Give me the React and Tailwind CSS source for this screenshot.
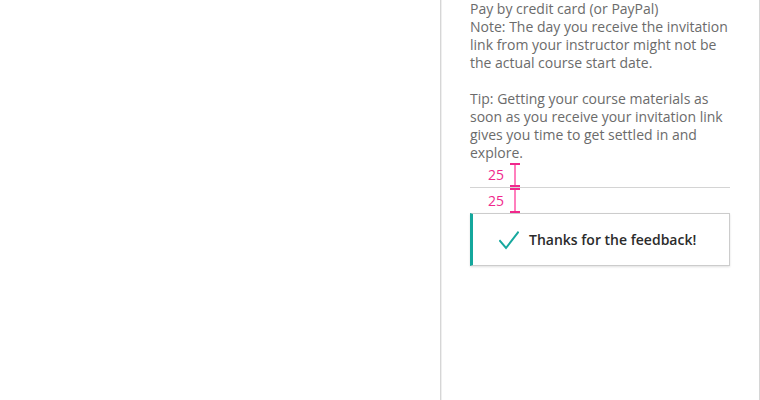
import React from "react";

function Check() {
  return (
    <svg width="20" height="20" viewBox="0 0 20 20" className="shrink-0 mt-[3px]">
      <path d="M1 10 L7 17 L19 1.5" fill="none" stroke="#17a89e" strokeWidth="2" strokeLinecap="square" strokeLinejoin="miter" />
    </svg>
  );
}

function Marker({ top, height }) {
  return (
    <div className="absolute left-[40px] w-[10px] flex flex-col items-center" style={{ top, height }}>
      <div className="w-[10px] h-[2px] bg-[#f0288c]" />
      <div className="flex-1 w-[2px] bg-[#ff7fbd]" />
      <div className="w-[10px] h-[2px] bg-[#f0288c]" />
    </div>
  );
}

export default function App() {
  const lines1 = [
    "Pay by credit card (or PayPal)",
    "Note: The day you receive the invitation",
    "link from your instructor might not be",
    "the actual course start date.",
  ];
  const lines2 = [
    "Tip: Getting your course materials as",
    "soon as you receive your invitation link",
    "gives you time to get settled in and",
    "explore.",
  ];
  return (
    <div className="w-[760px] h-[400px] bg-white flex overflow-hidden" style={{ fontFamily: '"Open Sans", sans-serif' }}>
      <div className="w-[440px] shrink-0" />
      <div className="w-[320px] h-[400px] border-l border-r border-[#d6d6d6] shadow-[inset_1px_0_0_#efefef] px-[29px]">
        <div className="relative">
          <div className="text-[14px] leading-[18px] text-[#6b6b6b] whitespace-nowrap">
            {lines1.map((l) => (
              <div key={l}>{l}</div>
            ))}
            <div className="h-[18px]" />
            {lines2.map((l) => (
              <div key={l}>{l}</div>
            ))}
          </div>
          <div className="mt-[25px] h-px bg-[#d4d4d4]" />
          <div className="mt-[25px] h-[53px] border border-[#cccccc] border-l-[3px] border-l-[#14a79c] shadow-[0_1px_2px_rgba(0,0,0,0.12)] flex items-center pl-[26px] gap-[10px]">
            <Check />
            <span className="text-[14px] font-semibold text-[#2b2b2b]">Thanks for the feedback!</span>
          </div>
          <div className="absolute left-[2px] top-[166px] w-[32px] text-right text-[14px] leading-[18px] text-[#f0288c]">25</div>
          <div className="absolute left-[2px] top-[192px] w-[32px] text-right text-[14px] leading-[18px] text-[#f0288c]">25</div>
          <Marker top={163} height={24} />
          <Marker top={188} height={25} />
        </div>
      </div>
    </div>
  );
}
